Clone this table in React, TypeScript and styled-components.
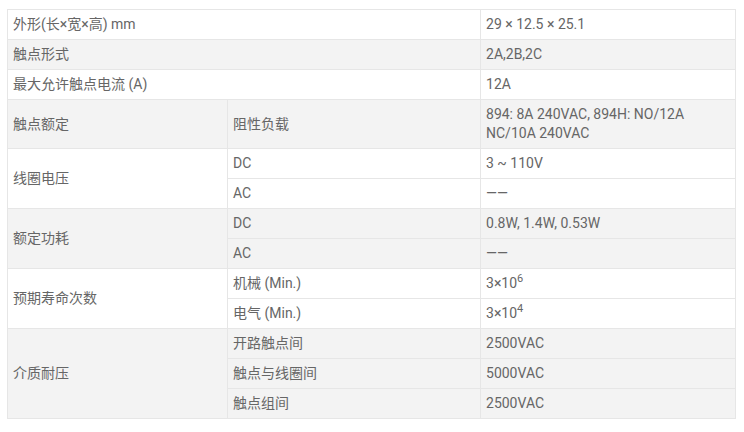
import React from 'react';
import styled, {createGlobalStyle} from 'styled-components';

const GlobalStyle = createGlobalStyle`
  html, body {
    margin: 0;
    padding: 0;
    background: #fff;
  }
`;

const Page = styled.div`
  padding: 9px 7px;
`;

const SpecTable = styled.table`
  width: 728px;
  border-collapse: collapse;
  table-layout: fixed;
  font-family: Roboto, "Noto Sans CJK SC", sans-serif;
  font-size: 14px;
  line-height: 19px;
  color: #666;
`;

const Row = styled.tr<{shade?: boolean}>`
  background: ${({shade}) => (shade ? '#f3f3f3' : '#fff')};
`;

const Cell = styled.td`
  border: 1px solid #e6e6e6;
  padding: 5px 5px;
  vertical-align: middle;
  text-align: left;
`;

type Spec = {
  label: string;
  shade: boolean;
  value?: React.ReactNode;
  sub?: {name: string; value: React.ReactNode}[];
};

const Sup = styled.sup`
  font-size: 11px;
  line-height: 0;
`;

const specs: Spec[] = [
  {label: '外形(长×宽×高) mm', shade: false, value: '29 × 12.5 × 25.1'},
  {label: '触点形式', shade: true, value: '2A,2B,2C'},
  {label: '最大允许触点电流 (A)', shade: false, value: '12A'},
  {
    label: '触点额定', shade: true,
    sub: [{name: '阻性负载', value: <>894: 8A 240VAC, 894H: NO/12A<br />NC/10A 240VAC</>}],
  },
  {
    label: '线圈电压', shade: false,
    sub: [{name: 'DC', value: '3 ~ 110V'}, {name: 'AC', value: '——'}],
  },
  {
    label: '额定功耗', shade: true,
    sub: [{name: 'DC', value: '0.8W, 1.4W, 0.53W'}, {name: 'AC', value: '——'}],
  },
  {
    label: '预期寿命次数', shade: false,
    sub: [
      {name: '机械 (Min.)', value: <>3×10<Sup>6</Sup></>},
      {name: '电气 (Min.)', value: <>3×10<Sup>4</Sup></>},
    ],
  },
  {
    label: '介质耐压', shade: true,
    sub: [
      {name: '开路触点间', value: '2500VAC'},
      {name: '触点与线圈间', value: '5000VAC'},
      {name: '触点组间', value: '2500VAC'},
    ],
  },
];

export default function App() {
  return (
    <>
      <GlobalStyle />
      <Page>
        <SpecTable>
          <colgroup>
            <col style={{width: 220}} />
            <col style={{width: 253}} />
            <col style={{width: 255}} />
          </colgroup>
          <tbody>
            {specs.map((s) =>
              s.sub ? (
                s.sub.map((r, i) => (
                  <Row key={s.label + i} shade={s.shade}>
                    {i === 0 && <Cell rowSpan={s.sub!.length}>{s.label}</Cell>}
                    <Cell>{r.name}</Cell>
                    <Cell>{r.value}</Cell>
                  </Row>
                ))
              ) : (
                <Row key={s.label} shade={s.shade}>
                  <Cell colSpan={2}>{s.label}</Cell>
                  <Cell>{s.value}</Cell>
                </Row>
              )
            )}
          </tbody>
        </SpecTable>
      </Page>
    </>
  );
}
